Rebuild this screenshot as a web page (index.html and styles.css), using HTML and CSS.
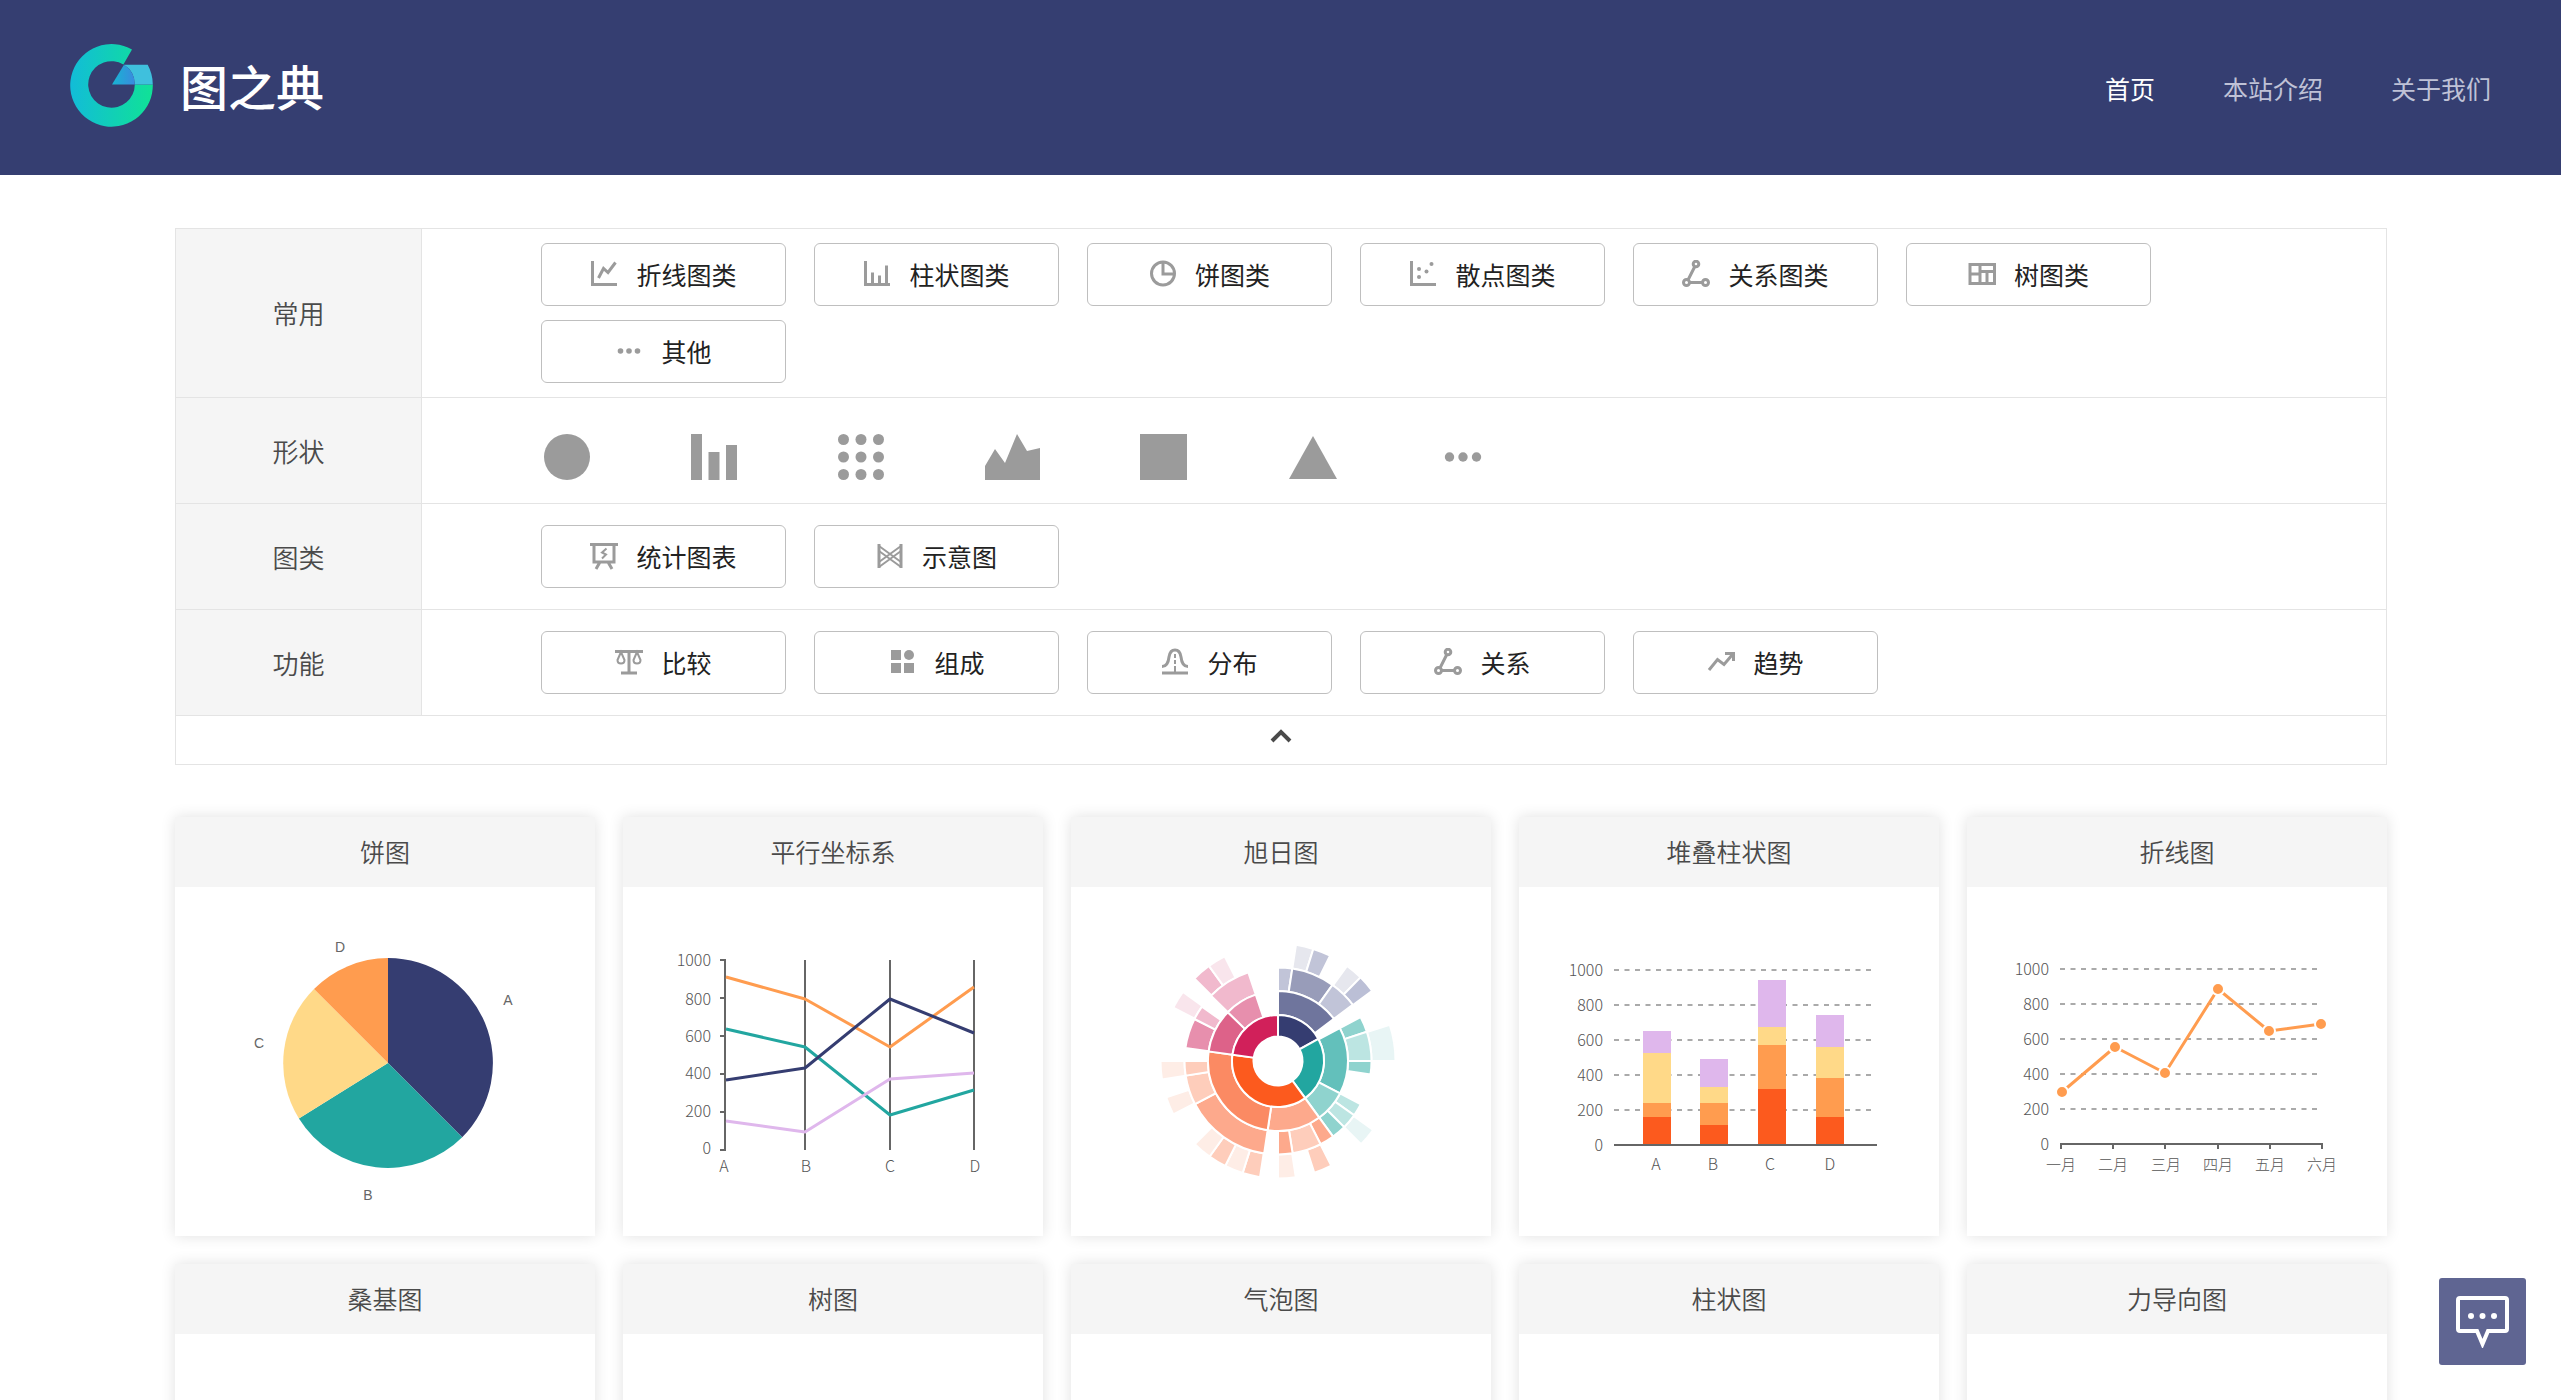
FILE: index.html
```html
<!DOCTYPE html>
<html lang="zh-CN">
<head>
<meta charset="utf-8">
<meta name="viewport" content="width=device-width, initial-scale=1">
<title>图之典</title>
<link rel="stylesheet" href="styles.css">
</head>
<body>
<header class="site-header">
  <a class="brand" href="#">
    <svg class="brand-mark" viewBox="0 0 84 84" aria-hidden="true">
      <defs>
        <linearGradient id="ring" x1="0" y1="0" x2="1" y2="0"><stop offset="0" stop-color="#12bcd8"/><stop offset="1" stop-color="#10e296"/></linearGradient>
        <linearGradient id="wedge" x1="0" y1="0" x2="1" y2="0"><stop offset="0" stop-color="#17b5d3"/><stop offset="1" stop-color="#3a8ade"/></linearGradient>
      </defs>
      <path fill="url(#ring)" d="M62 6.5A41.3 41.3 0 1 0 82.8 41.4H64.8A23.3 23.3 0 1 1 53.4 21.4Z"/>
      <path fill="#3fc0dd" d="M54 21.7H77.7A41.3 41.3 0 0 1 82.8 41.4H64.8A23.3 23.3 0 0 0 54 21.7Z"/>
      <path fill="url(#wedge)" d="M42 41.4L54 21.7A23.3 23.3 0 0 1 64.8 41.4Z"/>
    </svg>
    <span class="brand-name">图之典</span>
  </a>
  <nav class="site-nav">
    <a class="is-active" href="#">首页</a>
    <a href="#">本站介绍</a>
    <a href="#">关于我们</a>
  </nav>
</header>

<main class="page">
  <section class="filters">
    <div class="filter-row">
      <h2 class="filter-label">常用</h2>
      <div class="filter-options">
        <button class="option" type="button"><svg class="icon" viewBox="0 0 28 28"><path d="M2.5 1V24.5H27"/><path d="M8.5 18L13.5 8.5L18 12.5L25.5 2.5"/></svg>折线图类</button>
        <button class="option" type="button"><svg class="icon" viewBox="0 0 28 28"><path d="M2.5 1V24.5H27M9.5 12.5V24M16.5 15.5V24M23.5 5.5V24"/></svg>柱状图类</button>
        <button class="option" type="button"><svg class="icon" viewBox="0 0 28 28"><circle cx="14" cy="13.5" r="11.5"/><path d="M14 3V14H24"/></svg>饼图类</button>
        <button class="option" type="button"><svg class="icon" viewBox="0 0 28 28"><path d="M2.5 1V24.5H27"/><g class="solid"><circle cx="10" cy="9" r="2"/><circle cx="17.5" cy="11.500" r="2"/><circle cx="22.500" cy="4" r="2"/><circle cx="10" cy="17" r="2"/></g></svg>散点图类</button>
        <button class="option" type="button"><svg class="icon" viewBox="0 0 28 28"><circle cx="14" cy="4" r="2.800"/><circle cx="4.500" cy="22.500" r="3"/><circle cx="23.500" cy="22.500" r="3"/><path d="M12.800 6.500L6 20M7.500 22.500H20.500"/></svg>关系图类</button>
        <button class="option" type="button"><svg class="icon" viewBox="0 0 28 28"><path d="M2 4.500H26.500V23.500H2ZM12 4.500V23.500M2 14H12M12 11.500H26.500M19 11.500V23.500"/></svg>树图类</button>
        <button class="option" type="button"><svg class="icon" viewBox="0 0 28 28"><g class="solid"><circle cx="5.500" cy="14" r="2.800"/><circle cx="14" cy="14" r="2.800"/><circle cx="22.500" cy="14" r="2.800"/></g></svg>其他</button>
      </div>
    </div>
    <div class="filter-row">
      <h2 class="filter-label">形状</h2>
      <div class="filter-shapes">
        <button class="shape" type="button" aria-label="圆形"><svg width="52" height="46" viewBox="0 0 52 46"><circle cx="26" cy="23" r="23"/></svg></button>
        <button class="shape" type="button" aria-label="柱形"><svg width="52" height="46" viewBox="0 0 52 46"><path d="M3 0h11v46H3zM20.500 18h11v28h-11zM38 11h11v35H38z"/></svg></button>
        <button class="shape" type="button" aria-label="点阵"><svg width="52" height="46" viewBox="0 0 52 46"><circle cx="8.500" cy="5.500" r="5.500"/><circle cx="26" cy="5.500" r="5.500"/><circle cx="43.500" cy="5.500" r="5.500"/><circle cx="8.500" cy="23" r="5.500"/><circle cx="26" cy="23" r="5.500"/><circle cx="43.500" cy="23" r="5.500"/><circle cx="8.500" cy="40.500" r="5.500"/><circle cx="26" cy="40.500" r="5.500"/><circle cx="43.500" cy="40.500" r="5.500"/></svg></button>
        <button class="shape" type="button" aria-label="面积"><svg width="60" height="46" viewBox="0 0 60 46"><path d="M3 32L13 15L23 29L35 0L45 17L58 14V46H3Z"/></svg></button>
        <button class="shape" type="button" aria-label="方形"><svg width="52" height="46" viewBox="0 0 52 46"><path d="M3 0h47v46H3z"/></svg></button>
        <button class="shape" type="button" aria-label="三角形"><svg width="58" height="46" viewBox="0 0 58 46"><path d="M29 2L53 45H5Z"/></svg></button>
        <button class="shape" type="button" aria-label="其他形状"><svg width="52" height="46" viewBox="0 0 52 46"><circle cx="12.500" cy="23" r="4.700"/><circle cx="26" cy="23" r="4.700"/><circle cx="39.500" cy="23" r="4.700"/></svg></button>
      </div>
    </div>
    <div class="filter-row">
      <h2 class="filter-label">图类</h2>
      <div class="filter-options">
        <button class="option" type="button"><svg class="icon" viewBox="0 0 28 28"><path d="M0 2.500H28M4 2.500V20H24V2.500M10 20L6 27M18 20L22 27"/><path class="thin" d="M16.500 6.500L12 10.500L16 12.500L12 16.500"/></svg>统计图表</button>
        <button class="option" type="button"><svg class="icon" viewBox="0 0 28 28"><path d="M3 2V26M25 2V26"/><path class="thin" d="M3 4L25 20M3 9L25 25M3 20L25 4M3 25L25 9"/></svg>示意图</button>
      </div>
    </div>
    <div class="filter-row">
      <h2 class="filter-label">功能</h2>
      <div class="filter-options">
        <button class="option" type="button"><svg class="icon" viewBox="0 0 28 28"><path d="M0 3.500H28M14 3V25M6 25H22"/><path class="thin" d="M6 4L2.500 12Q2.500 15.500 6 15.500T9.500 12ZM22 4L18.500 12Q18.500 15.500 22 15.500T25.500 12Z"/></svg>比较</button>
        <button class="option" type="button"><svg class="icon" viewBox="0 0 28 28"><g class="solid"><path d="M3 2h10v10H3zM3 15h10v10H3zM16 15h10v10H16z"/><circle cx="21" cy="7" r="5"/></g></svg>组成</button>
        <button class="option" type="button"><svg class="icon" viewBox="0 0 28 28"><path d="M1 25H27"/><path d="M1 18.500Q7 18.500 8 9Q9 2 14 2T20 9Q21 18.500 27 18.500"/><path class="thin" d="M14 6V10M14 12V16M14 18V24"/></svg>分布</button>
        <button class="option" type="button"><svg class="icon" viewBox="0 0 28 28"><circle cx="14" cy="4" r="2.800"/><circle cx="4.500" cy="22.500" r="3"/><circle cx="23.500" cy="22.500" r="3"/><path d="M12.800 6.500L6 20M7.500 22.500H20.500"/></svg>关系</button>
        <button class="option" type="button"><svg class="icon" viewBox="0 0 28 28"><path d="M2 22L10.500 11.500L17 16.500L25.500 6.500M18 5.500H26.500V13"/></svg>趋势</button>
      </div>
    </div>
    <button class="collapse" type="button" aria-label="收起"><svg width="22" height="14" viewBox="0 0 22 14"><path d="M2 12L11 3L20 12"/></svg></button>
  </section>

  <section class="gallery">
    <a class="card" href="#">
      <h3 class="card-title">饼图</h3>
      <svg class="chart" viewBox="0 0 420 349">
        <path fill="#353d71" d="M213 176V71A105 105 0 0 1 287.200 250.200Z"/>
        <path fill="#22a6a0" d="M213 176L287.200 250.200A105 105 0 0 1 123.900 231.500Z"/>
        <path fill="#ffd988" d="M213 176L123.900 231.500A105 105 0 0 1 139 102Z"/>
        <path fill="#ff9c4f" d="M213 176L139 102A105 105 0 0 1 213 71Z"/>
        <g class="pie-label"><text x="333" y="118">A</text><text x="193" y="313">B</text><text x="84" y="161">C</text><text x="165" y="65">D</text></g>
      </svg>
    </a>
    <a class="card" href="#">
      <h3 class="card-title">平行坐标系</h3>
      <svg class="chart" viewBox="0 0 420 349">
        <path class="axis" d="M97 73H102V263H97M97 111H102M97 149H102M97 187H102M97 225H102M182 73V263M267 73V263M351 73V263"/>
        <g class="series">
          <path stroke="#22a6a0" d="M103 142L182 160L267 228L351 203"/>
          <path stroke="#ff9c4f" d="M103 90L182 112L267 160L351 100"/>
          <path stroke="#353d71" d="M103 193L182 181L267 112L351 146"/>
          <path stroke="#dfb7ec" d="M103 234L182 245L267 192L351 186"/>
        </g>
        <g class="tick-y"><text x="88" y="79">1000</text><text x="88" y="118">800</text><text x="88" y="155">600</text><text x="88" y="192">400</text><text x="88" y="230">200</text><text x="88" y="267">0</text></g>
        <g class="tick-x"><text x="101" y="285">A</text><text x="183" y="285">B</text><text x="267" y="285">C</text><text x="352" y="285">D</text></g>
      </svg>
    </a>
    <a class="card" href="#">
      <h3 class="card-title">旭日图</h3>
      <svg class="chart" viewBox="0 0 420 349"><g id="sunburst" class="sunburst" transform="translate(207 174)"></g></svg>
    </a>
    <a class="card" href="#">
      <h3 class="card-title">堆叠柱状图</h3>
      <svg class="chart" viewBox="0 0 420 349">
        <path class="grid" d="M95 83H354M95 118H354M95 153H354M95 188H354M95 223H354"/>
        <path fill="#dfb7ec" d="M124 144h28v23h-28zM181 172h28v28h-28zM239 93h28v48h-28zM297 128h28v32h-28z"/>
        <path fill="#ffd988" d="M124 166h28v50h-28zM181 200h28v16h-28zM239 140h28v19h-28zM297 160h28v32h-28z"/>
        <path fill="#ff9c4f" d="M124 216h28v14h-28zM181 216h28v23h-28zM239 158h28v44h-28zM297 191h28v39h-28z"/>
        <path fill="#fc5a1e" d="M124 230h28v28h-28zM181 238h28v20h-28zM239 202h28v56h-28zM297 230h28v28h-28z"/>
        <path class="axis" d="M95 258H358"/>
        <g class="tick-y"><text x="84" y="89">1000</text><text x="84" y="124">800</text><text x="84" y="159">600</text><text x="84" y="194">400</text><text x="84" y="229">200</text><text x="84" y="264">0</text></g>
        <g class="tick-x"><text x="137" y="283">A</text><text x="194" y="283">B</text><text x="251" y="283">C</text><text x="311" y="283">D</text></g>
      </svg>
    </a>
    <a class="card" href="#">
      <h3 class="card-title">折线图</h3>
      <svg class="chart" viewBox="0 0 420 349">
        <path class="grid" d="M93 82H351M93 117H351M93 152H351M93 187H351M93 222H351"/>
        <path class="axis" d="M94 262V257H355V262M146 257V262M198 257V262M251 257V262M303 257V262"/>
        <g class="series"><path stroke="#ff9c4f" d="M95 205L148 160L198 186L251 102L302 144L354 137"/></g>
        <g class="dots"><circle cx="95" cy="205" r="6"/><circle cx="148" cy="160" r="6"/><circle cx="198" cy="186" r="6"/><circle cx="251" cy="102" r="6"/><circle cx="302" cy="144" r="6"/><circle cx="354" cy="137" r="6"/></g>
        <g class="tick-y"><text x="82" y="88">1000</text><text x="82" y="123">800</text><text x="82" y="158">600</text><text x="82" y="193">400</text><text x="82" y="228">200</text><text x="82" y="263">0</text></g>
        <g class="tick-x month"><text x="94" y="283">一月</text><text x="146" y="283">二月</text><text x="199" y="283">三月</text><text x="251" y="283">四月</text><text x="303" y="283">五月</text><text x="355" y="283">六月</text></g>
      </svg>
    </a>
    <a class="card" href="#"><h3 class="card-title">桑基图</h3><svg class="chart" viewBox="0 0 420 349"></svg></a>
    <a class="card" href="#"><h3 class="card-title">树图</h3><svg class="chart" viewBox="0 0 420 349"></svg></a>
    <a class="card" href="#"><h3 class="card-title">气泡图</h3><svg class="chart" viewBox="0 0 420 349"></svg></a>
    <a class="card" href="#"><h3 class="card-title">柱状图</h3><svg class="chart" viewBox="0 0 420 349"></svg></a>
    <a class="card" href="#"><h3 class="card-title">力导向图</h3><svg class="chart" viewBox="0 0 420 349"></svg></a>
  </section>
</main>

<button class="feedback" type="button" aria-label="反馈">
  <svg width="53" height="53" viewBox="0 0 53 53"><path d="M4 3H49a2 2 0 0 1 2 2V34a2 2 0 0 1-2 2H32L26.500 49L21 36H4a2 2 0 0 1-2-2V5a2 2 0 0 1 2-2Z"/><g class="solid"><circle cx="15" cy="21" r="3"/><circle cx="26.500" cy="21" r="3"/><circle cx="38" cy="21" r="3"/></g></svg>
</button>
<script src="sunburst.js"></script>
</body>
</html>
```

FILE: styles.css
```css
* {
  box-sizing: border-box;
}

body {
  margin: 0;
  background: #fff;
  color: #4a4a4a;
  font-family: "Noto Sans CJK SC", sans-serif;
  font-size: 25px;
  line-height: 36px;
}

a {
  color: inherit;
  text-decoration: none;
}

button {
  margin: 0;
  padding: 0;
  border: 0;
  background: none;
  color: inherit;
  font: inherit;
  cursor: pointer;
}

h2,
h3 {
  margin: 0;
  font-weight: 350;
}

/* Header */

.site-header {
  display: flex;
  align-items: center;
  justify-content: space-between;
  height: 175px;
  padding: 0 70px;
  background: #353e71;
}

.brand {
  display: flex;
  align-items: center;
  gap: 26px;
  padding-bottom: 6px;
  color: #fff;
}

.brand-mark {
  width: 84px;
  height: 84px;
}

.brand-name {
  font-size: 48px;
  font-weight: 500;
  line-height: 56px;
}

.site-nav {
  display: flex;
  gap: 68px;
  color: #bfc2d6;
}

.site-nav .is-active {
  color: #fff;
}

/* Filter panel */

.page {
  padding: 53px 174px 53px 175px;
}

.filters {
  border: 1px solid #e4e4e4;
}

.filter-row {
  display: grid;
  grid-template-columns: 246px 1fr;
  border-bottom: 1px solid #e4e4e4;
}

.filter-label {
  display: flex;
  align-items: center;
  justify-content: center;
  border-right: 1px solid #e4e4e4;
  background: #f5f5f5;
  font-size: 26px;
}

.filter-options {
  display: flex;
  flex-wrap: wrap;
  gap: 14px 28px;
  padding: 21px 0 21px 119px;
}

.filter-row:first-child .filter-options {
  padding-top: 14px;
  padding-bottom: 14px;
}

.option {
  display: flex;
  align-items: center;
  justify-content: center;
  gap: 18px;
  width: 245px;
  height: 63px;
  padding-bottom: 2px;
  border: 1px solid #bfbfbf;
  border-radius: 6px;
  background: #fff;
  color: #222;
}

.icon {
  width: 28px;
  height: 28px;
  fill: none;
  stroke: #9b9b9b;
  stroke-width: 3;
}

.icon .thin {
  stroke-width: 2;
}

.icon .solid {
  fill: #9b9b9b;
  stroke: none;
}

.filter-shapes {
  display: flex;
  gap: 95px;
  padding: 36px 0 23px 119px;
}

.shape svg {
  display: block;
  fill: #9b9b9b;
}

.collapse {
  display: flex;
  align-items: center;
  justify-content: center;
  width: 100%;
  height: 48px;
  padding-bottom: 8px;
}

.collapse svg {
  fill: none;
  stroke: #4a4a4a;
  stroke-width: 4;
}

/* Chart cards */

.gallery {
  display: grid;
  grid-template-columns: repeat(5, 1fr);
  gap: 28px;
  margin-top: 52px;
}

.card {
  background: #fff;
  box-shadow: 0 0 14px rgba(0, 0, 0, 0.12);
}

.card-title {
  padding: 16px 0 18px;
  background: #f5f5f5;
  font-size: 25px;
  text-align: center;
}

.chart {
  display: block;
  width: 100%;
}

.axis {
  fill: none;
  stroke: #666;
  stroke-width: 2;
}

.grid {
  fill: none;
  stroke: #aaa;
  stroke-width: 2;
  stroke-dasharray: 5 5.5;
}

.series {
  fill: none;
  stroke-width: 3;
  stroke-linejoin: round;
}

.dots {
  fill: #ff9c4f;
  stroke: #fff;
  stroke-width: 2;
}

.tick-y,
.tick-x {
  fill: #555;
  font-size: 16px;
  font-weight: 300;
}

.tick-y {
  text-anchor: end;
}

.tick-x {
  text-anchor: middle;
}

.month {
  font-size: 15px;
}

.pie-label {
  fill: #666;
  font-family: "Liberation Sans", sans-serif;
  font-size: 14px;
  text-anchor: middle;
}

.sunburst {
  stroke: #fff;
  stroke-width: 2;
}

/* Feedback button */

.feedback {
  position: fixed;
  right: 35px;
  bottom: 35px;
  display: flex;
  align-items: center;
  justify-content: center;
  width: 87px;
  height: 87px;
  border-radius: 3px;
  background: #5f6592;
}

.feedback svg {
  fill: none;
  stroke: #fff;
  stroke-width: 4;
}

.feedback .solid {
  fill: #fff;
  stroke: none;
}
```

FILE: sunburst.js
```js
// Radius of each ring boundary, from the hole outwards.
const radii = [24.5, 46, 70, 93.5, 117.5];

// [ring, start angle, end angle, colour]; angles run clockwise from the top.
const segments = [
  [3, 8.8, 17.5, "#e6e7ee"], [3, 17.5, 26.3, "#c1c4d8"], [3, 36, 44.6, "#e6e7ee"], [3, 44.6, 53.3, "#bbbfd6"],
  [3, 72, 90, "#e8f5f5"], [3, 126, 135, "#e8f5f5"],
  [3, 153, 162, "#fecdbb"], [3, 171.3, 180, "#feede6"],
  [3, 188.8, 197.5, "#fecdbb"], [3, 197.5, 206.7, "#feede6"], [3, 206.7, 215.6, "#fecdbb"], [3, 215.6, 225, "#feede6"],
  [3, 243, 252, "#feede6"], [3, 261, 270, "#feede6"],
  [3, 297, 306, "#f9e5ec"], [3, 314.6, 324, "#f1b9cd"], [3, 324, 333, "#f9e5ec"],
  [2, 0, 8.8, "#c1c4d8"], [2, 8.8, 35.6, "#989cb9"], [2, 35.6, 53, "#c1c4d8"],
  [2, 62, 71.8, "#8fd3ce"], [2, 71.8, 90, "#bce5e2"], [2, 90, 98.3, "#8fd3ce"],
  [2, 117.6, 125.5, "#bce5e2"], [2, 125.5, 135, "#bce5e2"], [2, 135, 143.9, "#8fd3ce"],
  [2, 143.9, 152.9, "#fda98c"], [2, 152.9, 171, "#fecdbb"], [2, 171, 180, "#fda98c"],
  [2, 188.5, 242.6, "#fda98c"], [2, 242.6, 261, "#fecdbb"], [2, 261, 270, "#fecdbb"],
  [2, 278, 296.7, "#e78fad"], [2, 296.7, 305.6, "#f1b9cd"], [2, 314.2, 341.5, "#f1b9cd"],
  [1, 0, 53, "#6f759d"], [1, 62, 117.6, "#63c0bb"], [1, 117.6, 143.9, "#8fd3ce"],
  [1, 143.9, 188.5, "#fda98c"], [1, 188.5, 277.9, "#fb8a63"],
  [1, 277.9, 314.2, "#dd6289"], [1, 314.2, 341.5, "#e78fad"],
  [0, 0, 61.4, "#353d71"], [0, 61.4, 143.8, "#22a6a0"], [0, 143.8, 277.9, "#fc5a1e"], [0, 277.9, 360, "#d1205a"]
];

const point = (radius, degrees) => {
  const angle = degrees * Math.PI / 180;
  return `${(radius * Math.sin(angle)).toFixed(2)} ${(-radius * Math.cos(angle)).toFixed(2)}`;
};

const group = document.getElementById("sunburst");
for (const [ring, start, end, colour] of segments) {
  const inner = radii[ring];
  const outer = radii[ring + 1];
  const large = end - start > 180 ? 1 : 0;
  const path = document.createElementNS("http://www.w3.org/2000/svg", "path");
  path.setAttribute("fill", colour);
  path.setAttribute("d",
    `M${point(outer, start)}A${outer} ${outer} 0 ${large} 1 ${point(outer, end)}` +
    `L${point(inner, end)}A${inner} ${inner} 0 ${large} 0 ${point(inner, start)}Z`);
  group.append(path);
}
```
